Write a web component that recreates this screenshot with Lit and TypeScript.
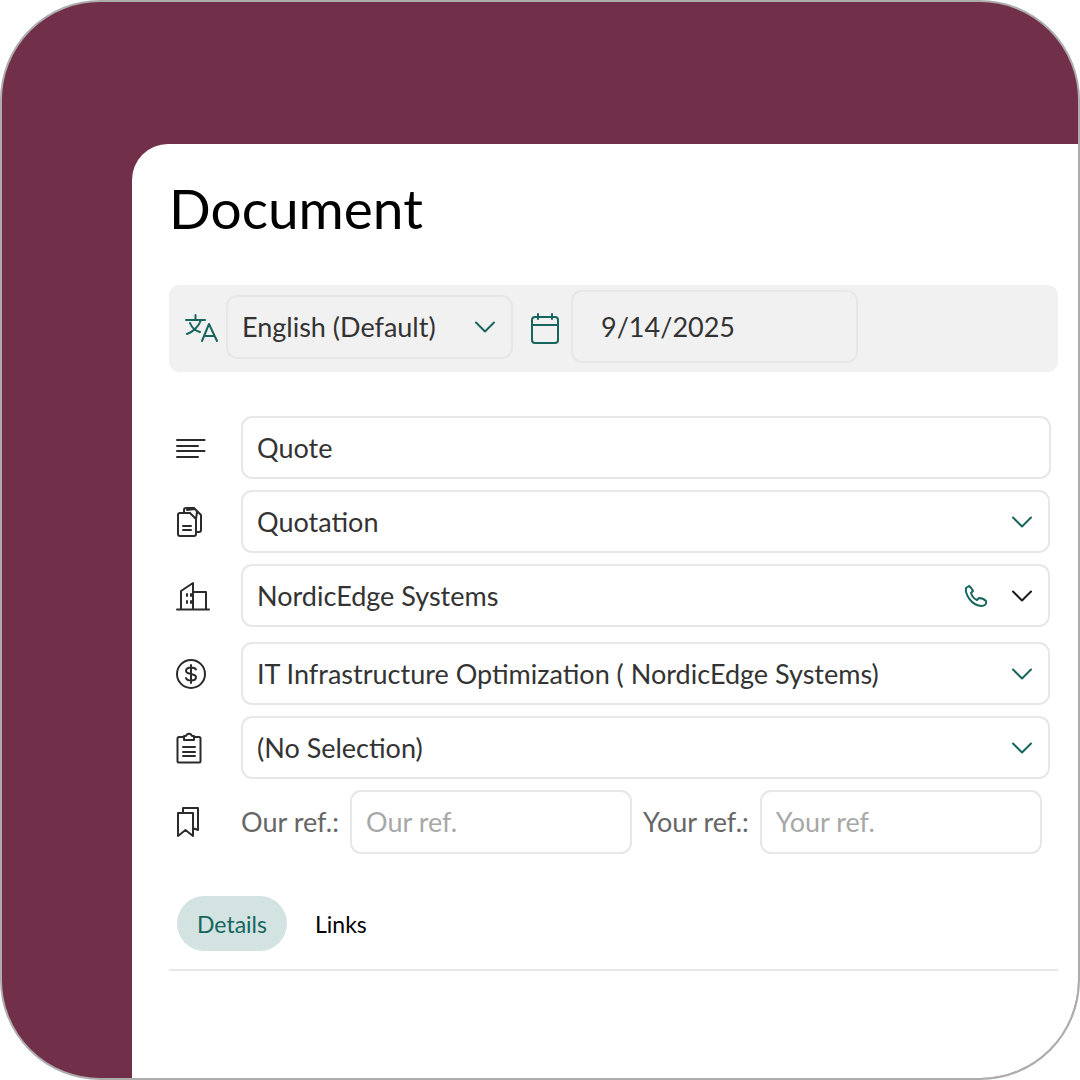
import { LitElement, html, css, svg } from "lit";
import { customElement } from "lit/decorators.js";

const chev = (dark = false) => html`<svg class="chev ${dark ? "dark" : ""}" viewBox="0 0 20 12" width="20" height="12"><path d="M1 1.5 10 10.5 19 1.5" /></svg>`;

const icons: Record<string, unknown> = {
  lines: svg`<path d="M1 2.5H28M1 8.5H22M1 14H28M1 20H22"/>`,
  docs: svg`<path d="M18 6.5V29a2 2 0 0 1-2 1.500H4a2 2 0 0 1-2-2V11a2 2 0 0 1 2-2h6l4-3h4a3 3 0 0 1 4 3v17" transform="translate(0 0)" style="display:none"/><path d="M4 9h9l7 7v11a2 2 0 0 1-2 2H4a2 2 0 0 1-2-2V11a2 2 0 0 1 2-2Z" style="display:none"/>`,
};

@customElement("app-root")
export class AppRoot extends LitElement {
  static styles = css`
    :host { display: block; width: 1080px; height: 1080px; background: #fff; font-family: Lato, sans-serif; }
    .frame { box-sizing: border-box; width: 1080px; height: 1080px; border: 2px solid #adadad; border-radius: 100px; background: #722f4a; overflow: hidden; padding: 142px 0 0 130px; }
    .panel { box-sizing: border-box; height: 936px; background: #fff; border-top-left-radius: 36px; padding: 31px 20px 0 37px; }
    h1 { margin: 0 0 44px 0; font-size: 55px; line-height: 66px; font-weight: 400; color: #000; height: 66px; }
    svg { display: block; flex: none; fill: none; stroke-linecap: round; stroke-linejoin: round; }
    .toolbar { box-sizing: border-box; height: 87px; background: #f1f1f1; border-radius: 10px; display: flex; align-items: center; padding: 0 0 0 15px; }
    .g { stroke: #17655d; stroke-width: 2; }
    .k { stroke: #2b2b2b; stroke-width: 2; }
    .box { box-sizing: border-box; border: 2px solid #e7e7e7; border-radius: 11px; display: flex; align-items: center; color: #333; font-size: 27px; padding: 0 16px 0 14px; }
    .lang { width: 287px; height: 64px; margin: 0 17px 0 8px; position: relative; top: -2px; }
    .date { width: 287px; height: 73px; margin-left: 11px; padding-left: 28px; position: relative; top: -2px; }
    .grow { flex: 1; }
    .chev { fill: none; stroke: #17655d; stroke-width: 2; }
    .chev.dark { stroke: #1a1a1a; }
    .rows { display: flex; flex-direction: column; margin-top: 44px; width: 881px; }
    .row { display: flex; align-items: center; height: 63px; }
    .ico { width: 72px; flex: none; display: flex; justify-content: flex-start; padding-left: 7px; box-sizing: border-box; }
    .row .box { flex: 1; height: 63px; }
    .mt10 { margin-top: 11px; }
    .mt15 { margin-top: 15px; }
    .star { width: 87px; flex: none; display: flex; justify-content: flex-start; padding-left: 39px; box-sizing: border-box; }
    .refs { display: flex; align-items: center; flex: 1; color: #666; font-size: 27px; }
    .refs .box { color: #a8a8a8; }
    .l { margin-right: 11px; }
    .refs .a { flex: none; width: 282px; height: 64px; margin-right: 11px; }
    .refs .b { flex: none; width: 282px; height: 64px; }
    .tabs { display: flex; align-items: center; margin: 43px 0 0 8px; gap: 28px; font-size: 23px; color: #000; }
    .tab-on { width: 110px; height: 55px; border-radius: 28px; background: #d2e3e2; color: #17655d; display: flex; align-items: center; justify-content: center; }
    .hr { height: 2px; background: #e8e8e8; margin-top: 18px; }
    .phone { margin-right: 24px; }
  `;

  render() {
    return html`
      <div class="frame">
        <div class="panel">
          <h1>Document</h1>
          <div class="toolbar">
            <svg class="g" width="34" height="34" viewBox="0 0 34 34"><path d="M2 8H21M11.500 3V8M17 8C15 14 9 20 3 22M6 11C8 16 12 19 16 20M18 29 25 12 33 29M20.500 24H30.500"/></svg>
            <div class="box lang"><span class="grow">English (Default)</span>${chev()}</div>
            <svg class="g" width="30" height="32" viewBox="0 0 30 32"><rect x="2" y="4" width="26" height="26" rx="3"/><path d="M2 12H28M8 1V6M22 1V6"/></svg>
            <div class="box date">9/14/2025</div>
          </div>
          <div class="rows">
            <div class="row" style="width:969px">
              <div class="ico"><svg class="k" width="30" height="20" viewBox="0 0 30 20"><path d="M1 2H28.500M1 8H22M1 13H28.500M1 19H22"/></svg></div>
              <div class="box"><span>Quote</span></div>
              <div class="star"><svg width="34" height="34" viewBox="0 0 34 34" fill="none" stroke="#f26b2d" stroke-width="2.500"><path d="M17 3.500 20.900 12.200 30.800 13.300 23.500 19.700 25.600 29.500 17 24.500 8.400 29.500 10.500 19.700 3.200 13.300 13.100 12.200Z"/></svg></div>
            </div>
            <div class="row mt10">
              <div class="ico"><svg class="k" width="28" height="32" viewBox="0 0 28 32"><path d="M4 7H14L20 13V28A2 2 0 0 1 18 30H4A2 2 0 0 1 2 28V9A2 2 0 0 1 4 7ZM8 7V4A2 2 0 0 1 10 2H18L25 9V24A2 2 0 0 1 23 26H20M11 4 19 3A6 6 0 0 1 21 6L20 13M7 20H15M7 24H15"/></svg></div>
              <div class="box"><span class="grow">Quotation</span>${chev()}</div>
            </div>
            <div class="row mt10">
              <div class="ico"><svg class="k" width="34" height="30" viewBox="0 0 34 30"><path d="M1 28.500H33M5 28V10L17 2V28M18 11H30V28M11 13V15M15 13V15M11 20V22M15 20V22" style="stroke-width:2"/></svg></div>
              <div class="box">
                <span class="grow">NordicEdge Systems</span>
                <svg class="g phone" width="24" height="24" viewBox="0 0 24 24"><path d="M5 2 2 4C1 10 7 21 17 22 21 22 23 20 22 17 20 15 17 14 15 14L13 16C10 15 8 12 7 9L9 7C8 5 7 3 5 2Z"/></svg>
                ${chev(true)}
              </div>
            </div>
            <div class="row mt15">
              <div class="ico"><svg class="k" width="30" height="30" viewBox="0 0 30 30"><circle cx="15" cy="15" r="14"/><path d="M20 10.500C19 9 17 8.500 15 8.500 12 8.500 10 10 10 12 10 16 20 14 20 18 20 20 18 21.500 15 21.500 12.500 21.500 10.500 20.500 10 19M15 6V24"/></svg></div>
              <div class="box"><span class="grow">IT Infrastructure Optimization ( NordicEdge Systems)</span>${chev()}</div>
            </div>
            <div class="row mt10">
              <div class="ico"><svg class="k" width="26" height="32" viewBox="0 0 26 32"><path d="M8 5H3A1.500 1.500 0 0 0 1.500 6.500V29A1.500 1.500 0 0 0 3 30.500H23A1.500 1.500 0 0 0 24.500 29V6.500A1.500 1.500 0 0 0 23 5H18M8 8V4H10C11 1 15 1 16 4H18V8ZM7 15H19M7 20H19M7 24H19"/></svg></div>
              <div class="box"><span class="grow">(No Selection)</span>${chev()}</div>
            </div>
            <div class="row mt10">
              <div class="ico"><svg class="k" width="24" height="32" viewBox="0 0 24 32"><path d="M2 7H17V30L9.500 24 2 30ZM7 7V2H22V24L17 22"/></svg></div>
              <div class="refs">
                <span class="l">Our ref.:</span>
                <div class="box a">Our ref.</div>
                <span class="l">Your ref.:</span>
                <div class="box b">Your ref.</div>
              </div>
            </div>
          </div>
          <div class="tabs"><div class="tab-on">Details</div><div>Links</div></div>
          <div class="hr"></div>
        </div>
      </div>
    `;
  }
}
void icons;
